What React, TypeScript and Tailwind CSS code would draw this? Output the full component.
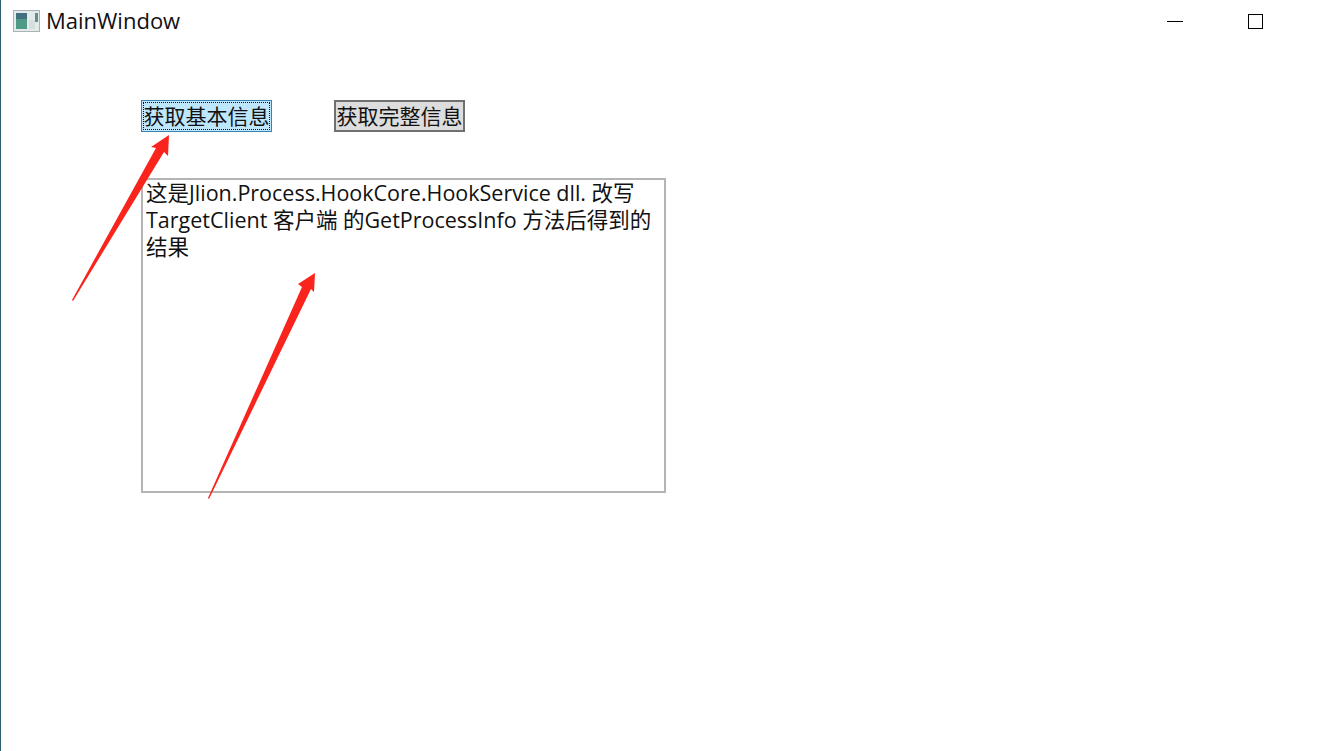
const font = "font-['Open_Sans','Noto_Sans_CJK_SC',sans-serif]"

function AppIcon() {
  return (
    <svg width="27" height="22" viewBox="0 0 27 22" className="shrink-0">
      <rect x="0.5" y="0.5" width="26" height="21" fill="#e4e9ea" stroke="#a9b2b6" />
      <rect x="3" y="3" width="11" height="16" fill="#4f9a86" />
      <rect x="3" y="3" width="11" height="6" fill="#41707f" />
      <rect x="16" y="10" width="6" height="9" fill="#d5dfdc" />
      <rect x="22" y="3" width="3" height="9" fill="#5f8f8f" />
    </svg>
  )
}

function Arrows() {
  return (
    <svg width="1321" height="751" viewBox="0 0 1321 751" className="absolute left-[-1px] top-0 pointer-events-none">
      <path d="M72 300 L156 148 L151 147 L169 135 L168 156 L164 152 L73 301 Z" fill="#f9241c" />
      <path d="M208 498 L302 287 L298 284 L315 273 L314 292 L311 289 L209 499 Z" fill="#f9241c" />
    </svg>
  )
}

export default function App() {
  return (
    <div className={`${font} relative h-[751px] w-[1321px] overflow-hidden bg-white border-l border-[#2f5f6b] text-[#111]`}>
      {/* Title bar */}
      <div className="flex h-[42px] items-center pl-[12px]">
        <AppIcon />
        <span className="ml-[6px] pb-[2px] text-[22px] leading-none">MainWindow</span>
        <div className="ml-auto flex items-center pr-[58px]">
          <div className="h-[1px] w-[16px] bg-black" />
          <div className="ml-[65px] h-[15px] w-[15px] border border-black" />
        </div>
      </div>

      {/* Content */}
      <div className="pl-[140px] pt-[58px]">
        <div className="flex gap-[62px]">
          <button className="h-[32px] w-[131px] border border-[#3c7fb1] bg-[#bee6fd] text-[21px] leading-none whitespace-nowrap outline-1 outline-dotted -outline-offset-3 outline-[#111]">
            获取基本信息
          </button>
          <button className="h-[32px] w-[131px] border-2 border-[#707070] bg-[#dddddd] text-[21px] leading-none whitespace-nowrap">
            获取完整信息
          </button>
        </div>
        <div className="mt-[46px] h-[315px] w-[525px] border-2 border-[#b4b4b4] px-[3px] text-[21.5px] leading-[25px]">
          <div className="h-[27px] whitespace-nowrap">这是Jlion.Process.HookCore.HookService dll. 改写</div>
          <div className="h-[27px] whitespace-nowrap">TargetClient 客户端 的GetProcessInfo 方法后得到的</div>
          <div className="h-[27px] whitespace-nowrap">结果</div>
        </div>
      </div>

      <Arrows />
    </div>
  )
}
